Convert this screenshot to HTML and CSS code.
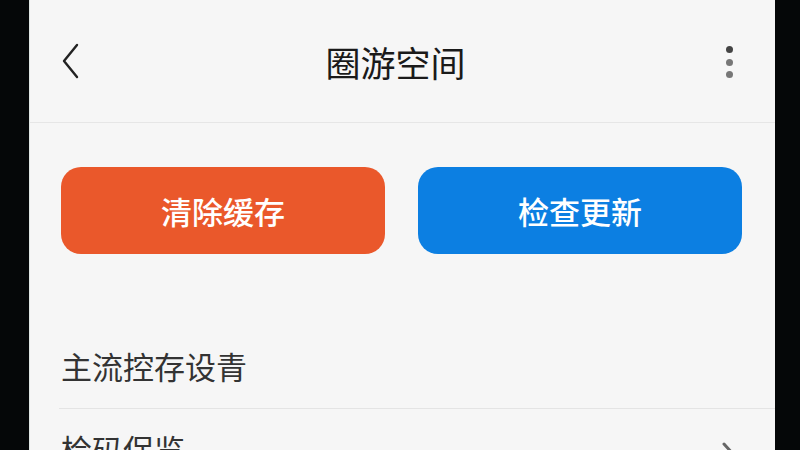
FILE: index.html
```html
<!DOCTYPE html>
<html>
    <head>
        <meta charset="utf-8">
        <link rel="stylesheet" href="styles.css">
    </head>
    <body>
        <div class="screen">
            <div class="topbar">
                <div class="back">
                    <svg width="20" height="36" viewBox="0 0 20 36"><path d="M16 2 L3 18 L16 34" fill="none" stroke="#222" stroke-width="2.4" stroke-linecap="round" stroke-linejoin="round"/></svg>
                </div>
                <div class="title">圈游空间</div>
                <div class="more">
                    <span class="dot dark"></span>
                    <span class="dot"></span>
                    <span class="dot"></span>
                </div>
            </div>
            <div class="actions">
                <div class="btn btn-orange">清除缓存</div>
                <div class="btn btn-blue">检查更新</div>
            </div>
            <div class="list">
                <div class="label">主流控存设青</div>
                <div class="row">
                    <span class="row-text">检码保览</span>
                    <svg class="arrow" width="16" height="28" viewBox="0 0 16 28"><path d="M3 3 L13 14 L3 25" fill="none" stroke="#666" stroke-width="3" stroke-linecap="round" stroke-linejoin="round"/></svg>
                </div>
            </div>
        </div>
    </body>
</html>
```
FILE: styles.css
```css
html, body{
    margin: 0;
    height: 100%;
    background-color: #050708;
    overflow: hidden;
}
body{
    display: flex;
    padding: 0 25px 0 29px;
    box-sizing: border-box;
    font-family: "Noto Sans CJK SC", "Noto Sans", sans-serif;
}
.screen{
    flex: 1;
    background-color: #f6f6f6;
    border-left: 1px solid #dfe6e3;
    display: flex;
    flex-direction: column;
}
.screen > div{
    flex-shrink: 0;
}

.topbar{
    height: 122px;
    border-bottom: 1px solid #e6e6e6;
    display: grid;
    grid-template-columns: 1fr auto 1fr;
    align-items: center;
}
.back{
    padding-left: 31px;
    display: flex;
}
.title{
    font-size: 35px;
    color: #1a1a1a;
    margin-left: -14px;
}
.more{
    justify-self: end;
    padding-right: 42px;
    display: flex;
    flex-direction: column;
    gap: 5.5px;
    padding-top: 2px;
}
.dot{
    width: 7px;
    height: 7px;
    border-radius: 50%;
    background-color: #777;
}
.dot.dark{
    background-color: #444;
}

.actions{
    display: flex;
    gap: 33px;
    padding: 44px 33px 0 31px;
}
.btn{
    flex: 1;
    height: 87px;
    border-radius: 20px;
    display: flex;
    align-items: center;
    justify-content: center;
    color: white;
    font-size: 31px;
    font-weight: 500;
}
.btn-orange{
    background-color: #ea582b;
}
.btn-blue{
    background-color: #0c7fe2;
}

.list{
    margin-left: 29px;
    margin-top: 92px;
}
.label{
    font-size: 31px;
    line-height: 40px;
    color: #333;
    padding: 0 0 22px 2px;
    border-bottom: 1px solid #e4e4e4;
}
.row{
    display: flex;
    align-items: center;
    justify-content: space-between;
    padding: 20px 38px 0 2px;
}
.row-text{
    font-size: 31px;
    line-height: 40px;
    color: #333;
}
.arrow{
    margin-top: 12px;
}
```
